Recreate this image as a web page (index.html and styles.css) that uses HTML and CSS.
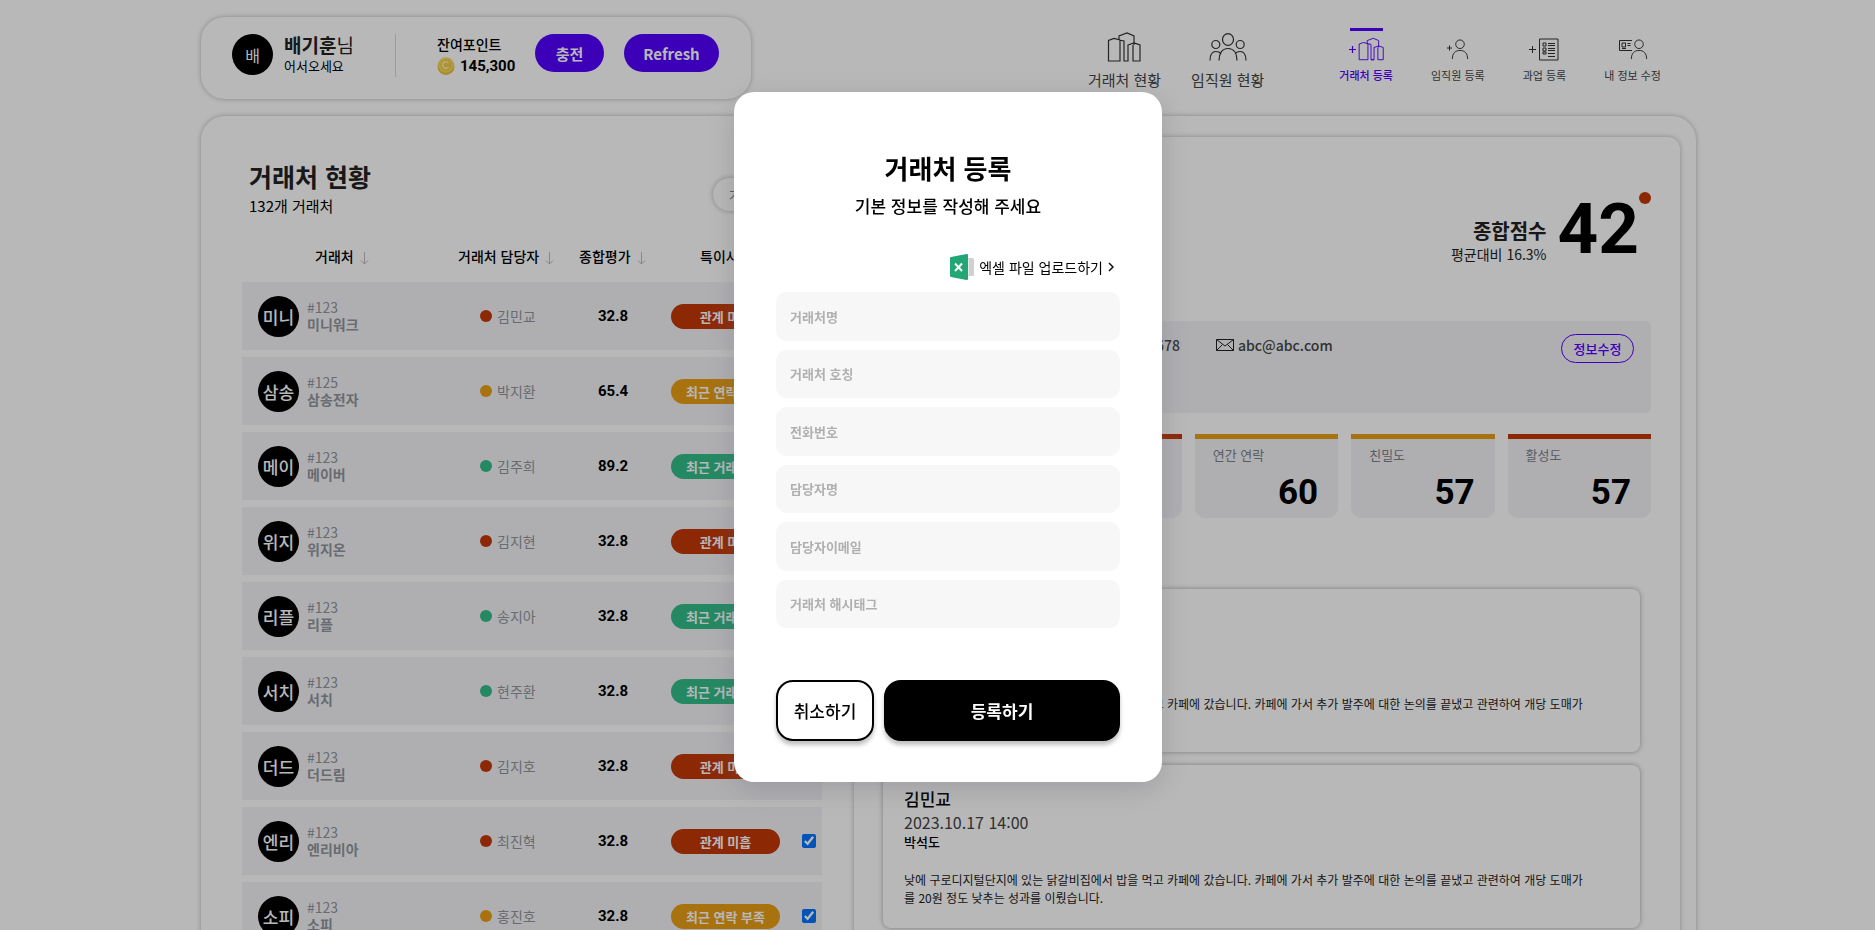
FILE: index.html
```html
<!DOCTYPE html>
<html lang="ko">
<head>
<meta charset="utf-8">
<title>거래처 현황</title>
<link rel="stylesheet" href="styles.css">
</head>
<body>
<svg class="sprite" aria-hidden="true">
  <symbol id="buildings" viewBox="0 0 34 30">
    <path d="M1.500 29V8.500L7 6.500l6 1.500V29zM12 8V4L20 1l7 3v9M12 8l5 1v20h4V12.500M21 29h-4M21 13l6-2 6 2v16h-7V13"/>
  </symbol>
  <symbol id="people" viewBox="0 0 38 28">
    <ellipse cx="19" cy="6.500" rx="5.500" ry="5.800"/><circle cx="6.800" cy="11.500" r="4"/><circle cx="31.200" cy="11.500" r="4"/>
    <path d="M10 27.500c0-7 3-12 9-12s9 5 9 12M1 27.500c0-6 2-9 6-9 2 0 4 1 5 2M37 27.500c0-6-2-9-6-9-2 0-4 1-5 2"/>
  </symbol>
  <symbol id="person" viewBox="0 0 18 22">
    <circle cx="9" cy="5.500" r="4.500"/><path d="M1 21c0-6 3-9 8-9s8 3 8 9"/>
  </symbol>
  <symbol id="arrow" viewBox="0 0 9 14"><path d="M4.500 1v12M1 9.500 4.500 13 8 9.500"/></symbol>
</svg>

<div class="page">
  <header class="top">
    <section class="user">
      <span class="avatar">배</span>
      <div class="hello"><p class="hello-name"><b>배기훈</b>님</p><p class="hello-sub">어서오세요</p></div>
      <div class="points">
        <p class="points-label">잔여포인트</p>
        <p class="points-value">
          <svg width="18" height="18" viewBox="0 0 18 18"><circle cx="9" cy="9.500" r="8.500" fill="#e8c03c"/><circle cx="9" cy="8" r="7.800" fill="#f7d75c"/><circle cx="9" cy="8" r="5.500" fill="#efcb4c"/><path d="M11.500 6.200a3.200 3.200 0 1 0 0 3.600" fill="none" stroke="#ffefa8" stroke-width="1.500"/></svg>
          145,300
        </p>
      </div>
      <button class="pill" type="button">충전</button>
      <button class="pill pill-refresh" type="button">Refresh</button>
    </section>
    <nav class="nav">
      <div class="nav-main">
        <a href="#"><svg width="34" height="30"><use href="#buildings"/></svg>거래처 현황</a>
        <a href="#"><svg width="38" height="30" viewBox="0 0 38 30"><use href="#people" width="38" height="28" y="1"/></svg>임직원 현황</a>
      </div>
      <div class="nav-sub">
        <a href="#" class="active"><svg width="36" height="24" viewBox="0 0 36 24"><path d="M1 12.500h7M4.500 9v7"/><use href="#buildings" x="10" width="26" height="24"/></svg>거래처 등록</a>
        <a href="#"><svg width="22" height="24" viewBox="0 0 22 24"><path d="M0 11h5M2.500 8.500v5"/><use href="#person" x="4" y="2" width="18" height="21"/></svg>임직원 등록</a>
        <a href="#"><svg width="30" height="24" viewBox="0 0 30 24"><path d="M0 12.500h7M3.500 9v7M10.500 2h18.500v21H10.500zM14 6h3v3H14zM14 11h3v3H14zM14 15h3v2H14zM19 6.500h7M19 8.500h7M19 11.500h7M19 13.500h7M19 16.500h7M19 19.500h7"/></svg>과업 등록</a>
        <a href="#"><svg width="30" height="24" viewBox="0 0 30 24"><path d="M14 13.500H1.500v-10H14M4 6h3.500v4H4zM9.500 6.500h3M9.500 8.500h3M4 11.500h4"/><use href="#person" x="12" y="2" width="18" height="21"/></svg>내 정보 수정</a>
      </div>
    </nav>
  </header>

  <main class="board">
    <section class="clients">
      <div class="clients-head">
        <div><h1>거래처 현황</h1><p class="count">132개 거래처</p></div>
        <input class="search" type="search" aria-label="거래처 검색" placeholder="거래처 검색">
      </div>
      <table class="list">
        <colgroup><col class="c-client"><col class="c-manager"><col class="c-score"><col class="c-note"><col class="c-check"></colgroup>
        <thead><tr>
          <th class="th-client">거래처<svg class="sort"><use href="#arrow"/></svg></th>
          <th class="th-manager">거래처 담당자<svg class="sort"><use href="#arrow"/></svg></th>
          <th class="th-score">종합평가<svg class="sort"><use href="#arrow"/></svg></th>
          <th class="th-note">특이사항<svg class="sort"><use href="#arrow"/></svg></th>
          <th></th>
        </tr></thead>
        <tbody>
          <tr><td><div class="client"><span class="avatar big">미니</span><p>#123<b>미니워크</b></p></div></td><td><span class="manager red">김민교</span></td><td class="score">32.8</td><td><span class="badge bg-red">관계 미흡</span></td><td><input type="checkbox" aria-label="미니워크 선택" checked></td></tr>
          <tr><td><div class="client"><span class="avatar big">삼송</span><p>#125<b>삼송전자</b></p></div></td><td><span class="manager amber">박지환</span></td><td class="score">65.4</td><td><span class="badge bg-amber">최근 연락 부족</span></td><td><input type="checkbox" aria-label="삼송전자 선택" checked></td></tr>
          <tr><td><div class="client"><span class="avatar big">메이</span><p>#123<b>메이버</b></p></div></td><td><span class="manager green">김주희</span></td><td class="score">89.2</td><td><span class="badge bg-green">최근 거래 증가</span></td><td><input type="checkbox" aria-label="메이버 선택" checked></td></tr>
          <tr><td><div class="client"><span class="avatar big">위지</span><p>#123<b>위지온</b></p></div></td><td><span class="manager red">김지현</span></td><td class="score">32.8</td><td><span class="badge bg-red">관계 미흡</span></td><td><input type="checkbox" aria-label="위지온 선택" checked></td></tr>
          <tr><td><div class="client"><span class="avatar big">리플</span><p>#123<b>리플</b></p></div></td><td><span class="manager green">송지아</span></td><td class="score">32.8</td><td><span class="badge bg-green">최근 거래 증가</span></td><td><input type="checkbox" aria-label="리플 선택" checked></td></tr>
          <tr><td><div class="client"><span class="avatar big">서치</span><p>#123<b>서치</b></p></div></td><td><span class="manager green">현주환</span></td><td class="score">32.8</td><td><span class="badge bg-green">최근 거래 증가</span></td><td><input type="checkbox" aria-label="서치 선택" checked></td></tr>
          <tr><td><div class="client"><span class="avatar big">더드</span><p>#123<b>더드림</b></p></div></td><td><span class="manager red">김지호</span></td><td class="score">32.8</td><td><span class="badge bg-red">관계 미흡</span></td><td><input type="checkbox" aria-label="더드림 선택" checked></td></tr>
          <tr><td><div class="client"><span class="avatar big">엔리</span><p>#123<b>엔리비아</b></p></div></td><td><span class="manager red">최진혁</span></td><td class="score">32.8</td><td><span class="badge bg-red">관계 미흡</span></td><td><input type="checkbox" aria-label="엔리비아 선택" checked></td></tr>
          <tr><td><div class="client"><span class="avatar big">소피</span><p>#123<b>소피</b></p></div></td><td><span class="manager amber">홍진호</span></td><td class="score">32.8</td><td><span class="badge bg-amber">최근 연락 부족</span></td><td><input type="checkbox" aria-label="소피 선택" checked></td></tr>
        </tbody>
      </table>
    </section>

    <section class="detail">
      <div class="total">
        <div class="total-text"><h2>종합점수</h2><p>평균대비 16.3%</p></div>
        <strong class="total-score">42</strong>
        <span class="total-dot"></span>
      </div>
      <div class="contact">
        <span class="phone">010-1234-5678</span>
        <a class="mail" href="mailto:abc@abc.com"><svg width="18" height="12" viewBox="0 0 18 12"><path d="M.5.500h17v11H.5zM.5.500 9 7 17.500.500M.5 11.500 6.500 5.500M17.500 11.500l-6-6"/></svg>abc@abc.com</a>
        <button class="edit" type="button">정보수정</button>
      </div>
      <div class="stats">
        <div class="stat s-amber"></div>
        <div class="stat s-red"></div>
        <div class="stat s-amber"><span>연간 연락</span><strong>60</strong></div>
        <div class="stat s-amber"><span>친밀도</span><strong>57</strong></div>
        <div class="stat s-red"><span>활성도</span><strong>57</strong></div>
      </div>
      <div class="notes">
        <article class="note"><h3>김민교</h3><time>2023.10.17 14:00</time><b>박석도</b><p>낮에 구로디지털단지에 있는 닭갈비집에서 밥을 먹고 카페에 갔습니다. 카페에 가서 추가 발주에 대한 논의를 끝냈고 관련하여 개당 도매가를 20원 정도 낮추는 성과를 이뤘습니다.</p></article>
        <article class="note"><h3>김민교</h3><time>2023.10.17 14:00</time><b>박석도</b><p>낮에 구로디지털단지에 있는 닭갈비집에서 밥을 먹고 카페에 갔습니다. 카페에 가서 추가 발주에 대한 논의를 끝냈고 관련하여 개당 도매가를 20원 정도 낮추는 성과를 이뤘습니다.</p></article>
      </div>
    </section>
  </main>
</div>

<div class="overlay">
  <form class="modal" role="dialog" aria-labelledby="modal-title">
    <h2 id="modal-title">거래처 등록</h2>
    <p class="modal-sub">기본 정보를 작성해 주세요</p>
    <a class="excel" href="#">
      <svg width="24" height="26" viewBox="0 0 24 26"><path d="M17 4h5.500q1.500 0 1.500 1.500v15q0 1.500-1.500 1.500H17z" fill="#d0d0d0"/><path d="M18.500 4.500v17" stroke="#e8e8e8"/><path d="M1 3 16.500.100q1.500-.2 1.500 1v23.800q0 1.200-1.500 1L1 23q-1-.2-1-1.200V4.200Q0 3.200 1 3z" fill="#21a675"/><path d="m5 9.500 7 7.500M12 9.500 5 17" stroke="#fff" stroke-width="2"/></svg>
      엑셀 파일 업로드하기
      <svg width="6" height="10" viewBox="0 0 6 10"><path d="m1 1 4 4-4 4" fill="none" stroke="#111" stroke-width="1.500"/></svg>
    </a>
    <div class="fields">
      <input type="text" aria-label="거래처명" placeholder="거래처명">
      <input type="text" aria-label="거래처 호칭" placeholder="거래처 호칭">
      <input type="tel" aria-label="전화번호" placeholder="전화번호">
      <input type="text" aria-label="담당자명" placeholder="담당자명">
      <input type="email" aria-label="담당자이메일" placeholder="담당자이메일">
      <input type="text" aria-label="거래처 해시태그" placeholder="거래처 해시태그">
    </div>
    <div class="actions">
      <button class="cancel" type="button">취소하기</button>
      <button class="submit" type="submit">등록하기</button>
    </div>
  </form>
</div>
</body>
</html>
```
FILE: styles.css
```css
* { box-sizing: border-box; }
body {
  margin: 0;
  height: 100vh;
  overflow: hidden;
  background: #fff;
  color: #000;
  font: 14px/20px "Noto Sans CJK KR", sans-serif;
}
h1, h2, h3, p { margin: 0; }
a { color: inherit; text-decoration: none; }
button, input { font-family: inherit; }
.sprite { display: none; }
.page { padding: 17px 179px 0 201px; }

/* header */
.top { display: flex; justify-content: space-between; align-items: flex-start; }
.user {
  display: flex;
  align-items: flex-start;
  width: 550px;
  height: 82px;
  padding: 17px 31px 0;
  border-radius: 24px;
  box-shadow: 0 0 5px rgba(0, 0, 0, .28);
}
.avatar {
  flex: none;
  display: flex;
  align-items: center;
  justify-content: center;
  width: 41px;
  height: 41px;
  border-radius: 50%;
  background: #000;
  color: #fff;
  font-size: 16px;
}
.hello { width: 112px; height: 43px; margin-left: 11px; border-right: 1px solid #d8d8d8; }
.hello-name { font-size: 19px; line-height: 21px; color: #222; }
.hello-sub { font-size: 13px; line-height: 22px; }
.points { width: 98px; margin-left: 41px; }
.points-label { font-weight: 500; line-height: 20px; }
.points-value { display: flex; align-items: center; gap: 5px; font: 700 15px/24px Roboto, sans-serif; }
.pill {
  width: 69px;
  height: 38px;
  border: 0;
  border-radius: 19px;
  padding: 0;
  background: #5300ff;
  color: #fff;
  font-size: 15px;
  font-weight: 700;
}
.pill-refresh { width: 95px; margin-left: 20px; }

.nav { display: flex; gap: 75px; padding-right: 35px; color: #444; }
.nav svg { fill: none; stroke: #333; stroke-width: 1; }
.nav a { display: flex; flex-direction: column; align-items: center; }
.nav-main { display: flex; gap: 30px; padding-top: 15px; font-size: 15px; line-height: 20px; }
.nav-main svg { stroke-width: 1.2; }
.nav-main a { gap: 8px; }
.nav-sub { display: flex; gap: 38px; padding-top: 11px; font-size: 11px; line-height: 16px; }
.nav-sub a { gap: 6px; }
.nav-sub a::before { content: ""; width: 33px; height: 3px; }
.nav-sub .active { color: #5300ff; font-weight: 500; }
.nav-sub .active::before { background: #5300ff; }
.nav-sub .active svg { stroke: #5300ff; stroke-width: 1.2; }

/* board */
.board {
  display: flex;
  justify-content: space-between;
  margin-top: 17px;
  padding: 21px 16px 40px 41px;
  border-radius: 24px;
  box-shadow: 0 0 5px rgba(0, 0, 0, .28);
}
.clients { width: 580px; }
.clients-head { display: flex; justify-content: space-between; padding: 20px 0 0 7px; }
h1 { font-size: 25px; line-height: 38px; color: #222; }
.count { font-size: 15px; line-height: 22px; }
.search {
  width: 109px;
  height: 33px;
  margin-top: 21px;
  padding: 0 16px;
  border: 0;
  border-radius: 17px;
  box-shadow: 0 0 5px rgba(0, 0, 0, .3);
  font-size: 13px;
}
.list { width: 100%; table-layout: fixed; border-collapse: separate; border-spacing: 0 7px; }
.c-client { width: 216px; }
.c-manager { width: 112px; }
.c-score { width: 85px; }
.c-note { width: 143px; }
.list th { height: 51px; padding: 12px 0 0; font-weight: 500; text-align: left; white-space: nowrap; }
.list .th-client { padding-left: 73px; }
.list .th-score { padding-left: 9px; }
.list .th-note { padding-left: 45px; }
.sort { width: 9px; height: 14px; margin-left: 6px; vertical-align: middle; fill: none; stroke: #bbb; }
.list td { height: 68px; padding: 0; background: #f3f3f7; white-space: nowrap; }
.client { display: flex; align-items: center; gap: 8px; padding-left: 16px; color: #91959c; line-height: 17px; }
.client b { display: block; }
.big { font-size: 17px; font-weight: 500; }
.manager { display: flex; align-items: center; gap: 5px; padding-left: 22px; color: #91959c; }
.manager::before { content: ""; width: 12px; height: 12px; border-radius: 50%; background: currentColor; }
.manager.red::before { background: #c43807; }
.manager.amber::before { background: #e99e14; }
.manager.green::before { background: #32bd88; }
.list .score { padding-left: 28px; font: 700 15px/20px Roboto, sans-serif; }
.badge {
  display: block;
  width: 109px;
  margin-left: 16px;
  border-radius: 13px;
  color: #fff;
  font-size: 13px;
  font-weight: 700;
  line-height: 25px;
  text-align: center;
}
.bg-red { background: #c43807; }
.bg-amber { background: #e99e14; }
.bg-green { background: #32bd88; }
.list input { display: block; width: 14px; height: 14px; margin: 0 0 0 4px; }

.detail {
  width: 826px;
  padding: 51px 29px 40px 28px;
  border-radius: 12px;
  box-shadow: 0 0 5px rgba(0, 0, 0, .28);
}
.total { display: flex; justify-content: flex-end; align-items: flex-start; }
.total-text { padding-top: 31px; text-align: right; }
.total h2 { font-size: 20px; line-height: 24px; color: #222; }
.total p { line-height: 22px; color: #222; }
.total-score { margin-left: 11px; font: 700 71px/82px Roboto, sans-serif; }
.total-dot { width: 12px; height: 12px; margin-top: 4px; border-radius: 50%; background: #c43807; }
.contact {
  display: flex;
  align-items: flex-start;
  height: 92px;
  margin-top: 51px;
  padding: 13px 17px;
  border-radius: 6px;
  background: #f3f3f7;
  color: #444;
  font-size: 14px;
  font-weight: 500;
  line-height: 22px;
}
.phone { width: 281px; text-align: right; }
.mail { display: flex; align-items: center; gap: 4px; margin-left: 36px; }
.mail svg { fill: none; stroke: #222; }
.edit {
  width: 73px;
  height: 29px;
  margin-left: auto;
  padding: 0;
  border: 1px solid #5300ff;
  border-radius: 15px;
  background: none;
  color: #5300ff;
  font-size: 13px;
  font-weight: 500;
}
.stats { display: grid; grid-template-columns: repeat(5, 1fr); gap: 13px; margin-top: 21px; }
.stat {
  display: flex;
  flex-direction: column;
  height: 84px;
  padding: 6px 20px 0 18px;
  border-top: 5px solid;
  border-radius: 0 0 10px 10px;
  background: #f3f3f7;
}
.s-amber { border-color: #e99e14; }
.s-red { border-color: #c43807; }
.stat span { font-size: 13px; color: #7d8188; }
.stat strong { margin-top: 8px; font: 700 35px/40px Roboto, sans-serif; text-align: right; }
.notes { display: grid; gap: 13px; margin: 71px 11px 0 1px; }
.note {
  height: 163px;
  padding: 22px 48px 0 21px;
  border-radius: 8px;
  box-shadow: 0 0 5px rgba(0, 0, 0, .35);
}
.note h3 { font-size: 17px; font-weight: 500; line-height: 24px; }
.note time { display: block; color: #444; font-size: 16px; line-height: 22px; }
.note b { display: block; font-size: 13px; font-weight: 500; line-height: 18px; }
.note p { margin-top: 20px; color: #222; font-size: 12px; line-height: 18px; word-break: break-all; }

/* dialog */
.overlay {
  position: fixed;
  inset: 0;
  display: flex;
  justify-content: center;
  align-items: flex-start;
  padding: 92px 0 0 21px;
  background: rgba(0, 0, 0, .28);
}
.modal {
  width: 428px;
  padding: 57px 42px 41px;
  border-radius: 20px;
  background: #fff;
  box-shadow: 0 7px 29px rgba(100, 100, 111, .3);
}
.modal h2 { font-size: 26px; font-weight: 700; line-height: 38px; text-align: center; }
.modal-sub { margin-top: 6px; font-size: 17px; font-weight: 500; line-height: 26px; text-align: center; }
.excel { display: flex; justify-content: flex-end; align-items: center; gap: 5px; height: 26px; margin: 35px 6px 12px 0; }
.fields { display: grid; grid-auto-rows: 1fr; gap: 9px; min-height: 336px; }
.fields input { width: 100%; padding: 0 14px; border: 0; border-radius: 11px; background: #f7f7f7; font-size: 13px; font-weight: 700; }
.fields input::placeholder { color: #b0b0b0; }
.actions { display: flex; gap: 10px; margin-top: 52px; }
.actions button {
  height: 61px;
  padding: 0;
  border: 2px solid #000;
  border-radius: 17px;
  box-shadow: 0 4px 4px rgba(0, 0, 0, .25);
  font-size: 17px;
  font-weight: 500;
}
.cancel { width: 98px; background: #fff; color: #000; }
.actions .submit { flex: 1; background: #000; color: #fff; font-weight: 700; }
```
